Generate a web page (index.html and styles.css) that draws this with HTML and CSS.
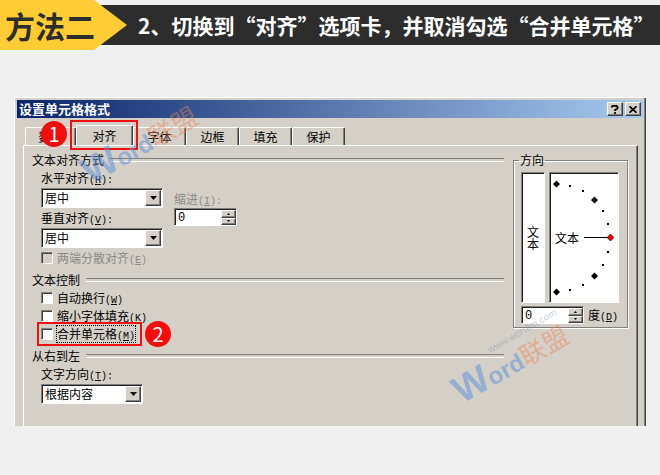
FILE: index.html
```
<!DOCTYPE html>
<html lang="zh-CN">
<head>
<meta charset="utf-8">
<meta name="viewport" content="width=device-width, initial-scale=1">
<title>设置单元格格式</title>
<link rel="stylesheet" href="styles.css">
</head>

<body>

<header class="banner">
  <div class="method">方法二</div>
  <h1 class="step">2、切换到“对齐”选项卡，并取消勾选“合并单元格”</h1>
</header>

<main class="dialog">
  <div class="titlebar">
    <h2>设置单元格格式</h2>
    <button type="button" class="raised" aria-label="帮助">
      <svg width="8" height="9" viewBox="0 0 8 9"><path d="M1 2.5V1.5L2 .8h3.5l1 1v1.700L4 5v1M3.200 8h1.700" fill="none" stroke="#000" stroke-width="1.800"/></svg>
    </button>
    <button type="button" class="raised" aria-label="关闭">
      <svg width="8" height="7" viewBox="0 0 8 7"><path d="M.5.3l7 6.400M7.500.3l-7 6.400" stroke="#000" stroke-width="1.700"/></svg>
    </button>
  </div>

  <nav class="tabs">
    <button type="button" class="tab first">数字</button>
    <button type="button" class="tab active">对齐</button>
    <button type="button" class="tab">字体</button>
    <button type="button" class="tab">边框</button>
    <button type="button" class="tab">填充</button>
    <button type="button" class="tab">保护</button>
    <span class="mark mark-tab"></span>
    <span class="badge badge-tab">1</span>
  </nav>

  <form class="page">
    <div class="options">
      <h3>文本对齐方式</h3>
      <div class="group align">
        <div class="fields">
          <label for="horizontal">水平对齐<span class="key">(<u>H</u>):</span></label>
          <div class="combo">
            <select id="horizontal"><option>居中</option></select>
            <span class="raised arrow"><svg width="7" height="4" viewBox="0 0 7 4"><path d="M0 0h7L3.500 4z"/></svg></span>
          </div>
          <label for="vertical">垂直对齐<span class="key">(<u>V</u>):</span></label>
          <div class="combo">
            <select id="vertical"><option>居中</option></select>
            <span class="raised arrow"><svg width="7" height="4" viewBox="0 0 7 4"><path d="M0 0h7L3.500 4z"/></svg></span>
          </div>
        </div>
        <div class="fields indent">
          <label for="indent" class="disabled">缩进<span class="key">(<u>I</u>):</span></label>
          <div class="spinner">
            <input type="text" id="indent" value="0">
            <button type="button" class="raised" aria-label="增加"><svg width="3" height="2" viewBox="0 0 3 2"><path d="M0 2h3L1.500 0z"/></svg></button>
            <button type="button" class="raised" aria-label="减少"><svg width="3" height="2" viewBox="0 0 3 2"><path d="M0 0h3L1.500 2z"/></svg></button>
          </div>
        </div>
      </div>
      <div class="group">
        <label class="check disabled"><input type="checkbox" disabled><span>两端分散对齐<span class="key">(<u>E</u>)</span></span></label>
      </div>

      <h3>文本控制</h3>
      <div class="group">
        <label class="check"><input type="checkbox"><span>自动换行<span class="key">(<u>W</u>)</span></span></label>
        <label class="check"><input type="checkbox"><span>缩小字体填充<span class="key">(<u>K</u>)</span></span></label>
        <label class="check focused"><input type="checkbox"><span>合并单元格<span class="key">(<u>M</u>)</span></span>
          <i class="mark mark-merge"></i>
          <b class="badge badge-merge">2</b>
        </label>
      </div>

      <h3>从右到左</h3>
      <div class="group">
        <div class="fields narrow">
          <label for="direction">文字方向<span class="key">(<u>T</u>):</span></label>
          <div class="combo">
            <select id="direction"><option>根据内容</option></select>
            <span class="raised arrow"><svg width="7" height="4" viewBox="0 0 7 4"><path d="M0 0h7L3.500 4z"/></svg></span>
          </div>
        </div>
      </div>
    </div>

    <fieldset class="orientation">
      <legend>方向</legend>
      <div class="dials">
        <button type="button" class="sunken upright">文<br>本</button>
        <div class="sunken dial">
          <span>文本</span>
          <svg width="64" height="128" viewBox="0 0 64 128">
            <path d="M34 63.500h24" stroke="#000"/>
            <g id="points">
              <path d="M3 10l3.500-3.500L10 10l-3.500 3.500zM41 26l3.500-3.500L48 26l-3.500 3.500zM41 102l3.500-3.500L48 102l-3.500 3.500zM3 118l3.500-3.500L10 118l-3.500 3.500z"/>
              <path d="M19 11h2v2h-2zM32 16h2v2h-2zM52 36h2v2h-2zM57 49h2v2h-2zM57 77h2v2h-2zM52 90h2v2h-2zM32 110h2v2h-2zM19 115h2v2h-2z"/>
            </g>
            <path d="M57 63.500l3.500-3.500 3.500 3.500-3.500 3.500z" fill="#e00" stroke="#300" stroke-width=".6"/>
          </svg>
        </div>
      </div>
      <div class="degrees">
        <div class="spinner">
          <input type="text" id="degrees" value="0">
          <button type="button" class="raised" aria-label="增加"><svg width="3" height="2" viewBox="0 0 3 2"><path d="M0 2h3L1.500 0z"/></svg></button>
          <button type="button" class="raised" aria-label="减少"><svg width="3" height="2" viewBox="0 0 3 2"><path d="M0 0h3L1.500 2z"/></svg></button>
        </div>
        <label for="degrees">度<span class="key">(<u>D</u>)</span></label>
      </div>
    </fieldset>
  </form>

  <div class="watermark watermark-top"><b>W</b>ord<em>联盟</em></div>
  <div class="watermark watermark-bottom"><small>www.wordlm.com</small><b>W</b>ord<em>联盟</em></div>
</main>

</body>
</html>
```
FILE: styles.css
```
* {
  box-sizing: border-box;
}

body {
  margin: 0;
  background: #f0f0f0;
  color: #000;
  font-family: "Noto Sans CJK SC", sans-serif;
  font-size: 12px;
  line-height: 16px;
}

h1, h2, h3 {
  margin: 0;
}

button, input, select {
  margin: 0;
  padding: 0;
  border: 0;
  border-radius: 0;
  color: inherit;
  font: inherit;
}

svg {
  display: block;
}

/* banner */

.banner {
  display: flex;
  align-items: center;
  height: 50px;
  background: linear-gradient(#2d2d2d, #2d2d2d) 0 5px / 100% 40px no-repeat;
}

.method {
  flex: none;
  width: 127px;
  padding-left: 5px;
  background: #ffcd33;
  clip-path: polygon(0 0, 94px 0, 100% 50%, 94px 100%, 0 100%);
  color: #2d2d2d;
  font-size: 30px;
  font-weight: bold;
  line-height: 50px;
}

.step {
  padding-left: 11px;
  color: #fff;
  font-size: 21px;
  line-height: 38px;
  white-space: nowrap;
}

/* dialog */

.dialog {
  position: relative;
  margin: 47px 14px 0;
  padding: 2px 3px 0 2px;
  background: #d4d0c8;
  border: solid #fff;
  border-width: 1px 0 0 1px;
  box-shadow: inset -1px 0 #404040, inset -2px 0 #808080;
}

.titlebar {
  display: flex;
  align-items: center;
  gap: 2px;
  height: 18px;
  padding: 0 2px;
  background: linear-gradient(to right, #0a246a, #a6caf0);
  color: #fff;
}

.titlebar h2 {
  flex: 1;
  font-size: 13px;
  line-height: 16px;
}

.titlebar button {
  width: 16px;
  height: 14px;
}

.raised {
  display: grid;
  place-items: center;
  background: #d4d0c8;
  border: 1px solid;
  border-color: #fff #404040 #404040 #fff;
  box-shadow: inset -1px -1px #808080;
}

.sunken, .combo, .spinner {
  background: #fff;
  border: 1px solid;
  border-color: #808080 #fff #fff #808080;
  box-shadow: inset 1px 1px #202020;
}

.tabs {
  position: relative;
  display: flex;
  align-items: flex-end;
  padding: 7px 8px 0;
}

.tab {
  width: 53px;
  height: 18px;
  background: none;
  border: 1px solid;
  border-color: #fff #404040 transparent #fff;
  border-bottom: 0;
  border-radius: 2px 2px 0 0;
  box-shadow: inset -1px 0 #808080;
  line-height: 16px;
}

.tab.first {
  width: 51px;
}

.tab.active {
  width: 57px;
  height: 20px;
}

.page {
  display: flex;
  align-items: flex-start;
  gap: 9px;
  margin: 0 5px 0 6px;
  padding: 6px 9px 22px 8px;
  border: solid;
  border-width: 1px 1px 0;
  border-color: #fff #404040 #fff #fff;
  box-shadow: inset -1px 0 #808080;
}

.options {
  flex: 1;
}

.options h3 {
  display: flex;
  align-items: center;
  gap: 6px;
  font-size: 12px;
  font-weight: normal;
}

.options h3::after {
  content: "";
  flex: 1;
  height: 2px;
  border-top: 1px solid #808080;
  border-bottom: 1px solid #fff;
}

.group + h3 {
  margin-top: 6px;
}

.group {
  padding: 2px 0 0 9px;
}

.align {
  display: flex;
  gap: 11px;
}

.fields {
  display: flex;
  flex-direction: column;
  gap: 2px;
  width: 122px;
}

.narrow {
  width: 102px;
}

.indent {
  gap: 1px;
  width: 63px;
  padding-top: 21px;
}

.key {
  font-family: "Liberation Mono", monospace;
  font-size: 10px;
  line-height: 1;
}

.disabled {
  color: #8a8a86;
}

.combo {
  display: flex;
  height: 20px;
  padding: 1px;
}

.combo select {
  flex: 1;
  min-width: 0;
  padding-left: 2px;
  appearance: none;
  background: none;
  line-height: 16px;
}

.arrow {
  width: 16px;
}

.spinner {
  display: grid;
  grid-template-columns: 1fr 15px;
  grid-template-rows: 1fr 1fr;
  width: 63px;
  height: 18px;
  padding: 1px 0 0 1px;
}

.spinner input {
  grid-row: 1 / 3;
  min-width: 0;
  padding-left: 2px;
  background: none;
  font-family: "Liberation Mono", monospace;
  line-height: 14px;
}

.check {
  position: relative;
  display: flex;
  align-items: center;
  gap: 4px;
  width: max-content;
  margin-bottom: 2px;
}

.check:last-child {
  margin-bottom: 0;
}

.check input {
  width: 12px;
  height: 12px;
  appearance: none;
  background: #fff;
  border: 1px solid;
  border-color: #808080 #fff #fff #808080;
  box-shadow: inset 1px 1px #404040;
}

.check.disabled input {
  background: #d4d0c8;
}

.focused > span {
  outline: 1px dotted #000;
}

/* orientation */

.orientation {
  width: 115px;
  margin: 0;
  padding: 4px 8px 3px 7px;
  border: 1px solid #808080;
  box-shadow: 1px 1px #fff, inset 1px 1px #fff;
}

.orientation legend {
  margin-left: -2px;
  padding: 0 1px;
}

.dials {
  display: flex;
  gap: 4px;
  height: 131px;
}

.upright {
  width: 24px;
  line-height: 12px;
}

.dial {
  flex: 1;
  display: grid;
  align-items: center;
}

.dial span, .dial svg {
  grid-area: 1 / 1;
}

.dial span {
  padding-left: 5px;
}

.degrees {
  display: flex;
  align-items: center;
  gap: 4px;
  margin-top: 3px;
  white-space: nowrap;
}

/* callouts */

.mark {
  position: absolute;
  border: 2px solid #f01010;
}

.mark-tab {
  left: 53px;
  top: 2px;
  width: 68px;
  height: 30px;
}

.mark-merge {
  left: -4px;
  top: -4px;
  width: 105px;
  height: 24px;
}

.badge {
  position: absolute;
  width: 26px;
  height: 26px;
  border-radius: 50%;
  background: #f50d0d;
  color: #fff;
  font-size: 20px;
  font-weight: normal;
  line-height: 26px;
  text-align: center;
}

.badge-tab {
  left: 24px;
  top: 3px;
}

.badge-merge {
  left: 104px;
  top: -5px;
}

.watermark {
  position: absolute;
  color: rgba(90, 140, 215, .5);
  font-family: "Liberation Sans", "Noto Sans CJK SC", sans-serif;
  font-size: 24px;
  font-weight: bold;
  line-height: 36px;
  transform: rotate(-30deg);
  white-space: nowrap;
  pointer-events: none;
}

.watermark b {
  font-size: 38px;
}

.watermark em {
  color: rgba(235, 130, 80, .45);
  font-size: 26px;
  font-style: normal;
  font-weight: normal;
}

.watermark small {
  position: absolute;
  left: 50px;
  top: -8px;
  color: rgba(120, 130, 160, .4);
  font-size: 10px;
  font-weight: normal;
  line-height: 12px;
}

.watermark-top {
  left: 62px;
  top: 26px;
}

.watermark-bottom {
  right: 71px;
  bottom: 42px;
}
```
